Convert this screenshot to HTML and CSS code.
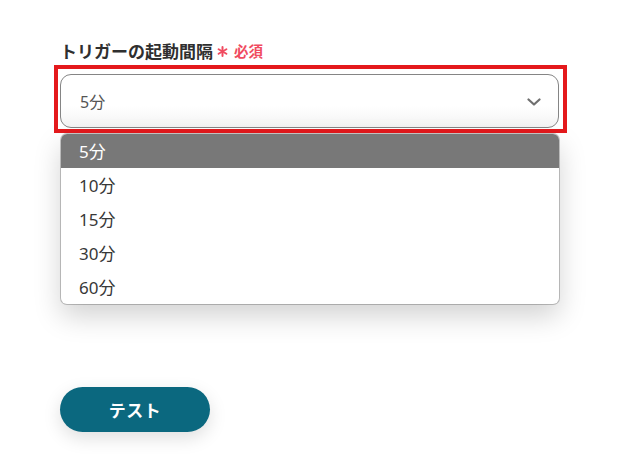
FILE: index.html
```html
<!DOCTYPE html>
<html lang="ja">
<head>
<meta charset="utf-8">
<link rel="stylesheet" href="styles.css">
</head>
<body>
<div class="page">
  <div class="label">
    <span class="label-text">トリガーの起動間隔</span>
    <svg class="req-star" width="11" height="11" viewBox="0 0 11 11"><g stroke="#f04b60" stroke-width="2" stroke-linecap="round"><line x1="5.5" y1="1" x2="5.5" y2="10"/><line x1="1.6" y1="3.25" x2="9.4" y2="7.75"/><line x1="1.6" y1="7.75" x2="9.4" y2="3.25"/></g></svg>
    <span class="req-text">必須</span>
  </div>
  <div class="field">
    <div class="select">
      <span class="select-value">5分</span>
      <svg class="chevron" width="14" height="8" viewBox="0 0 14 8"><polyline points="1.5,1.5 7,6.5 12.5,1.5" fill="none" stroke="#6f6f6f" stroke-width="2.2" stroke-linecap="round" stroke-linejoin="round"/></svg>
    </div>
    <div class="highlight"></div>
    <ul class="menu">
      <li class="option selected">5分</li>
      <li class="option">10分</li>
      <li class="option">15分</li>
      <li class="option">30分</li>
      <li class="option">60分</li>
    </ul>
  </div>
  <button class="test-btn">テスト</button>
</div>
</body>
</html>
```
FILE: styles.css
```css
html, body {
  margin: 0;
  padding: 0;
  background: #ffffff;
}
body {
  font-family: "Noto Sans", "Noto Sans CJK JP", sans-serif;
  width: 630px;
  height: 473px;
  overflow: hidden;
}
.page {
  padding: 39px 0 0 60px;
  width: 500px;
}
.label {
  display: flex;
  align-items: center;
  height: 22px;
}
.label-text {
  font-family: "Noto Sans CJK JP", sans-serif;
  font-weight: 700;
  font-size: 17px;
  color: #2f2f2f;
}
.req-star {
  display: block;
  margin-left: 4px;
  margin-top: 3px;
}
.req-text {
  font-family: "Noto Sans CJK JP", sans-serif;
  color: #f04b60;
  font-size: 14.5px;
  font-weight: 700;
  margin-left: 6px;
}
.field {
  position: relative;
  margin-top: 13px;
}
.select {
  box-sizing: border-box;
  height: 54px;
  width: 499px;
  border: 1px solid #858585;
  border-radius: 11px;
  background: linear-gradient(#ffffff 60%, #f3f3f3 100%);
  display: flex;
  align-items: center;
  justify-content: space-between;
  padding: 0 17px 0 19px;
}
.select-value {
  font-size: 16px;
  color: #555555;
}
.chevron {
  display: block;
  margin-top: 2px;
}
.highlight {
  position: absolute;
  left: -6px;
  top: -9px;
  width: 505px;
  height: 60px;
  border: 4px solid #e4191c;
}
.menu {
  position: absolute;
  left: 1px;
  top: 60px;
  width: 498px;
  margin: 0;
  padding: 0;
  list-style: none;
  background: #ffffff;
  border-radius: 6px;
  overflow: hidden;
  box-shadow: 0 0 0 1px rgba(0,0,0,0.22), 0 12px 28px rgba(0,0,0,0.18);
}
.option {
  height: 34px;
  line-height: 35px;
  padding-left: 18px;
  font-size: 17px;
  color: #383838;
}
.option.selected {
  background: #787878;
  color: #ffffff;
}
.test-btn {
  display: block;
  margin-top: 259px;
  width: 150px;
  height: 45px;
  border: none;
  border-radius: 23px;
  background: #0b687f;
  color: #ffffff;
  font-family: "Noto Sans CJK JP", sans-serif;
  font-weight: 700;
  font-size: 17px;
  letter-spacing: 0.5px;
  box-shadow: 0 6px 18px rgba(0,0,0,0.13);
}
```
